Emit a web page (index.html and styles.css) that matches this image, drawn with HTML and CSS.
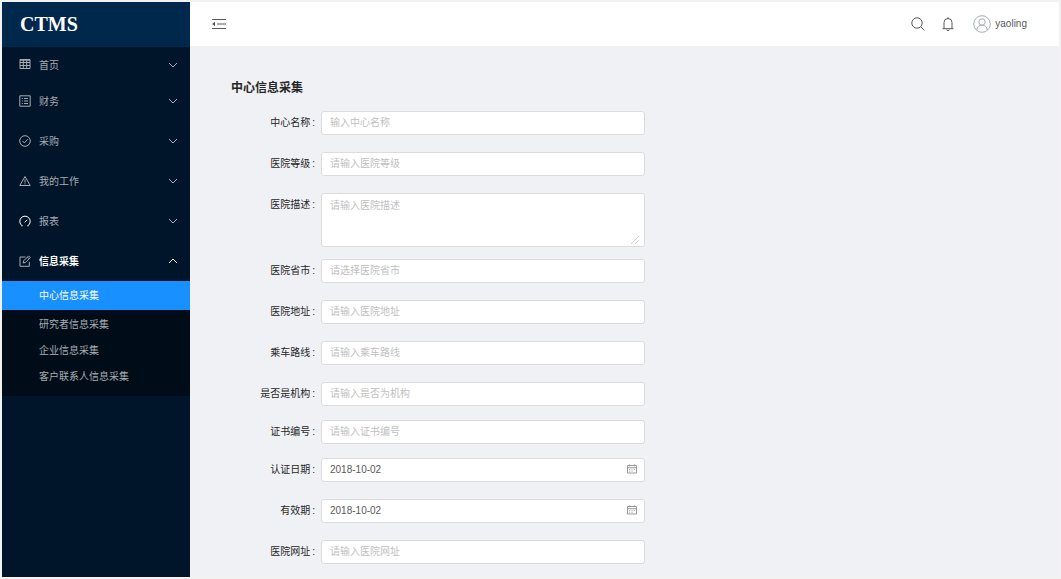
FILE: index.html
```html
<!DOCTYPE html>
<html lang="zh-CN">

<head>
    <meta charset="UTF-8">
    <meta name="viewport" content="width=device-width, initial-scale=1.0">
    <title>CTMS - 中心信息采集</title>
    <link rel="stylesheet" href="styles.css">
</head>

<body>
    <svg class="symbols" aria-hidden="true">
        <symbol id="down" viewBox="0 0 10 10"><path d="M1 3l4 4 4-4" /></symbol>
        <symbol id="up" viewBox="0 0 10 10"><path d="M1 7l4-4 4 4" /></symbol>
        <symbol id="calendar" viewBox="0 0 10 10">
            <path d="M.5 1.5h9v7.500h-9zM.5 3.700h9M2.700.3v2M7.300.3v2" />
            <path d="M2.200 5.500h1M4.500 5.500h1M6.800 5.500h1M2.200 7.200h1M4.500 7.200h1" />
        </symbol>
    </svg>

    <div class="layout">
        <aside class="sider">
            <div class="logo">CTMS</div>
            <nav>
                <button type="button" class="menu-item compact">
                    <svg class="icon raised" viewBox="0 0 12 12"><path d="M1 1.500h10v9H1zM1 4.500h10M1 7.500h10M4.300 1.500v9M7.700 1.500v9M1 2.200h10" /></svg>
                    <span>首页</span>
                    <svg class="arrow"><use href="#down" /></svg>
                </button>
                <button type="button" class="menu-item compact">
                    <svg class="icon" viewBox="0 0 12 12"><path d="M.8.8h10.400v10.400H.8zM5 3.500h4M5 6h4M5 8.500h4M2.800 3.500h1M2.800 6h1M2.800 8.500h1" /></svg>
                    <span>财务</span>
                    <svg class="arrow"><use href="#down" /></svg>
                </button>
                <div class="menu-group">
                    <button type="button" class="menu-item">
                        <svg class="icon" viewBox="0 0 12 12"><circle cx="6" cy="6" r="5.300" /><path d="M3.500 6l1.900 1.900 3.300-3.800" /></svg>
                        <span>采购</span>
                        <svg class="arrow"><use href="#down" /></svg>
                    </button>
                    <button type="button" class="menu-item">
                        <svg class="icon" viewBox="0 0 12 12"><path d="M6 1.500l5.200 9H.8zM6 4.500v3M6 8.300v1" /></svg>
                        <span>我的工作</span>
                        <svg class="arrow"><use href="#down" /></svg>
                    </button>
                    <button type="button" class="menu-item">
                        <svg class="icon bright" viewBox="0 0 12 12"><path d="M3 10.600a5.200 5.200 0 1 1 6 0M2.400 10.800h1.200M8.400 10.800h1.200M5.600 7.400l2.600-2.600" /></svg>
                        <span>报表</span>
                        <svg class="arrow"><use href="#down" /></svg>
                    </button>
                    <button type="button" class="menu-item open" aria-expanded="true">
                        <svg class="icon" viewBox="0 0 12 12"><path d="M6.500 2H1v9.300h9.300V6.800M4.200 8l.5-2.200L9.600.9l1.700 1.700-4.900 4.900zM8.400 2.100l1.700 1.700" /></svg>
                        <span>信息采集</span>
                        <svg class="arrow"><use href="#up" /></svg>
                    </button>
                </div>
                <div class="submenu">
                    <a href="#center" class="active">中心信息采集</a>
                    <div class="submenu-rest">
                        <a href="#researcher">研究者信息采集</a>
                        <a href="#company">企业信息采集</a>
                        <a href="#contact">客户联系人信息采集</a>
                    </div>
                </div>
            </nav>
        </aside>

        <div class="main">
            <header class="header">
                <button type="button" class="icon-btn" aria-label="收起菜单">
                    <svg class="fold" viewBox="0 0 16 12"><path d="M1 1.500h14M6 6h9M1 10.500h14" /><path class="solid" d="M1 6l3-2.200v4.400z" /></svg>
                </button>
                <div class="tools">
                    <button type="button" class="icon-btn" aria-label="搜索">
                        <svg class="tool" viewBox="0 0 14 14"><circle cx="6" cy="6" r="5.200" /><path d="M9.800 9.800l3.600 3.600" /></svg>
                    </button>
                    <button type="button" class="icon-btn" aria-label="通知">
                        <svg class="tool" viewBox="0 0 14 14"><path d="M1.500 11.700h11M3 11.700V5.500a4 4 0 0 1 8 0v6.200M7 .2v1.300M5.800 12.500a1.200 1.200 0 0 0 2.400 0" /></svg>
                    </button>
                    <a href="#user" class="user">
                        <svg class="avatar" viewBox="0 0 18 18"><circle cx="9" cy="9" r="8.300" /><circle cx="9" cy="7" r="3.200" /><path d="M3.700 15c.3-3 2.300-4.800 5.300-4.800s5 1.800 5.300 4.800" /></svg>
                        yaoling
                    </a>
                </div>
            </header>

            <main class="content">
                <h1>中心信息采集</h1>
                <form>
                    <div class="row">
                        <label for="name">中心名称</label>
                        <input type="text" id="name" placeholder="输入中心名称">
                    </div>
                    <div class="row">
                        <label for="level">医院等级</label>
                        <input type="text" id="level" placeholder="请输入医院等级">
                    </div>
                    <div class="row area">
                        <label for="desc">医院描述</label>
                        <div class="field">
                            <textarea id="desc" placeholder="请输入医院描述"></textarea>
                            <svg class="grip" viewBox="0 0 8 8"><path d="M0 8l8-8M4 8l4-4" /></svg>
                        </div>
                    </div>
                    <div class="row">
                        <label for="city">医院省市</label>
                        <input type="text" id="city" placeholder="请选择医院省市">
                    </div>
                    <div class="row">
                        <label for="address">医院地址</label>
                        <input type="text" id="address" placeholder="请输入医院地址">
                    </div>
                    <div class="row">
                        <label for="route">乘车路线</label>
                        <input type="text" id="route" placeholder="请输入乘车路线">
                    </div>
                    <div class="row tight">
                        <label for="org">是否是机构</label>
                        <input type="text" id="org" placeholder="请输入是否为机构">
                    </div>
                    <div class="row tight">
                        <label for="cert">证书编号</label>
                        <input type="text" id="cert" placeholder="请输入证书编号">
                    </div>
                    <div class="row">
                        <label for="certDate">认证日期</label>
                        <div class="field">
                            <input type="text" id="certDate" value="2018-10-02">
                            <svg class="calendar"><use href="#calendar" /></svg>
                        </div>
                    </div>
                    <div class="row">
                        <label for="validDate">有效期</label>
                        <div class="field">
                            <input type="text" id="validDate" value="2018-10-02">
                            <svg class="calendar"><use href="#calendar" /></svg>
                        </div>
                    </div>
                    <div class="row">
                        <label for="site">医院网址</label>
                        <input type="text" id="site" placeholder="请输入医院网址">
                    </div>
                </form>
            </main>
        </div>
    </div>
</body>

</html>
```
FILE: styles.css
```css
* {
    box-sizing: border-box;
}

body {
    margin: 0;
    background: #f2f2f2;
    color: #262626;
    font: 10px/16px "Liberation Sans", "Noto Sans CJK SC", sans-serif;
}

button,
input,
textarea {
    font: inherit;
    color: inherit;
}

button {
    border: 0;
    padding: 0;
    background: none;
    cursor: pointer;
}

a {
    color: inherit;
    text-decoration: none;
}

svg {
    display: block;
    flex: none;
    fill: none;
    stroke: currentColor;
}

.symbols {
    display: none;
}

.layout {
    display: flex;
    min-height: 100vh;
    padding: 2px;
}

/* sidebar */
.sider {
    flex: none;
    width: 188px;
    background: #001529;
    color: #a6adb4;
}

.logo {
    height: 45px;
    padding-left: 18px;
    background: #00284d;
    color: #fff;
    font: bold 20px/44px "Liberation Serif", serif;
}

.menu-item {
    display: flex;
    align-items: center;
    width: 100%;
    height: 40px;
    padding: 0 12px 0 17px;
    text-align: left;
}

.menu-item.compact {
    height: 36px;
}

.menu-item span {
    flex: 1;
    margin-left: 8px;
    padding-top: 2px;
}

.menu-group {
    margin-top: 2px;
}

.icon {
    width: 12px;
    height: 12px;
}

.icon.raised {
    margin-bottom: 2px;
}

.icon.bright {
    color: #fff;
}

.arrow {
    width: 10px;
    height: 10px;
}

.open span,
.open .arrow {
    color: #fff;
}

.open span {
    font-weight: bold;
}

.submenu {
    background: #000c17;
}

.submenu a {
    display: block;
    padding-left: 37px;
    line-height: 26px;
}

.submenu a.active {
    background: #1890ff;
    color: #fff;
    line-height: 29px;
}

.submenu-rest {
    padding: 2px 0 6px;
}

/* right side */
.main {
    flex: 1;
    min-width: 0;
    background: #f0f1f5;
}

.header {
    display: flex;
    align-items: center;
    justify-content: space-between;
    height: 44px;
    padding: 0 32px 0 21px;
    background: #fff;
    color: #595959;
}

.fold {
    width: 16px;
    height: 12px;
}

.solid {
    fill: currentColor;
    stroke: none;
}

.tools {
    display: flex;
    align-items: center;
    gap: 16px;
}

.tool {
    width: 14px;
    height: 14px;
}

.user {
    display: flex;
    align-items: center;
    gap: 4px;
    margin-left: 2px;
}

.avatar {
    width: 18px;
    height: 18px;
    color: #9fb3b5;
}

.content {
    padding: 32px 40px 12px 41px;
}

h1 {
    margin: 0 0 13px;
    font-size: 12px;
    line-height: 20px;
}

form {
    max-width: 414px;
}

.row {
    display: flex;
    margin-bottom: 17px;
}

.row.area {
    margin-bottom: 12px;
}

.row.tight {
    margin-bottom: 14px;
}

.row:last-child {
    margin-bottom: 0;
}

.row label {
    flex: none;
    width: 90px;
    padding-right: 6px;
    line-height: 24px;
    text-align: right;
}

.row label::after {
    content: ":";
    margin-left: 2px;
}

.field {
    position: relative;
    flex: 1;
}

input,
textarea {
    display: block;
    width: 100%;
    height: 24px;
    padding: 0 8px 2px;
    border: 1px solid #dcdcdf;
    border-radius: 3px;
    background: #fff;
    color: #595959;
}

textarea {
    height: 54px;
    padding-top: 4px;
    resize: none;
}

::placeholder {
    color: #bfbfbf;
}

input:focus,
textarea:focus {
    border-color: #1890ff;
    outline: none;
}

.grip {
    position: absolute;
    right: 6px;
    bottom: 3px;
    width: 8px;
    height: 8px;
    color: #d0d0d0;
}

.calendar {
    position: absolute;
    top: 6px;
    right: 8px;
    width: 10px;
    height: 10px;
    color: #999;
}
```
